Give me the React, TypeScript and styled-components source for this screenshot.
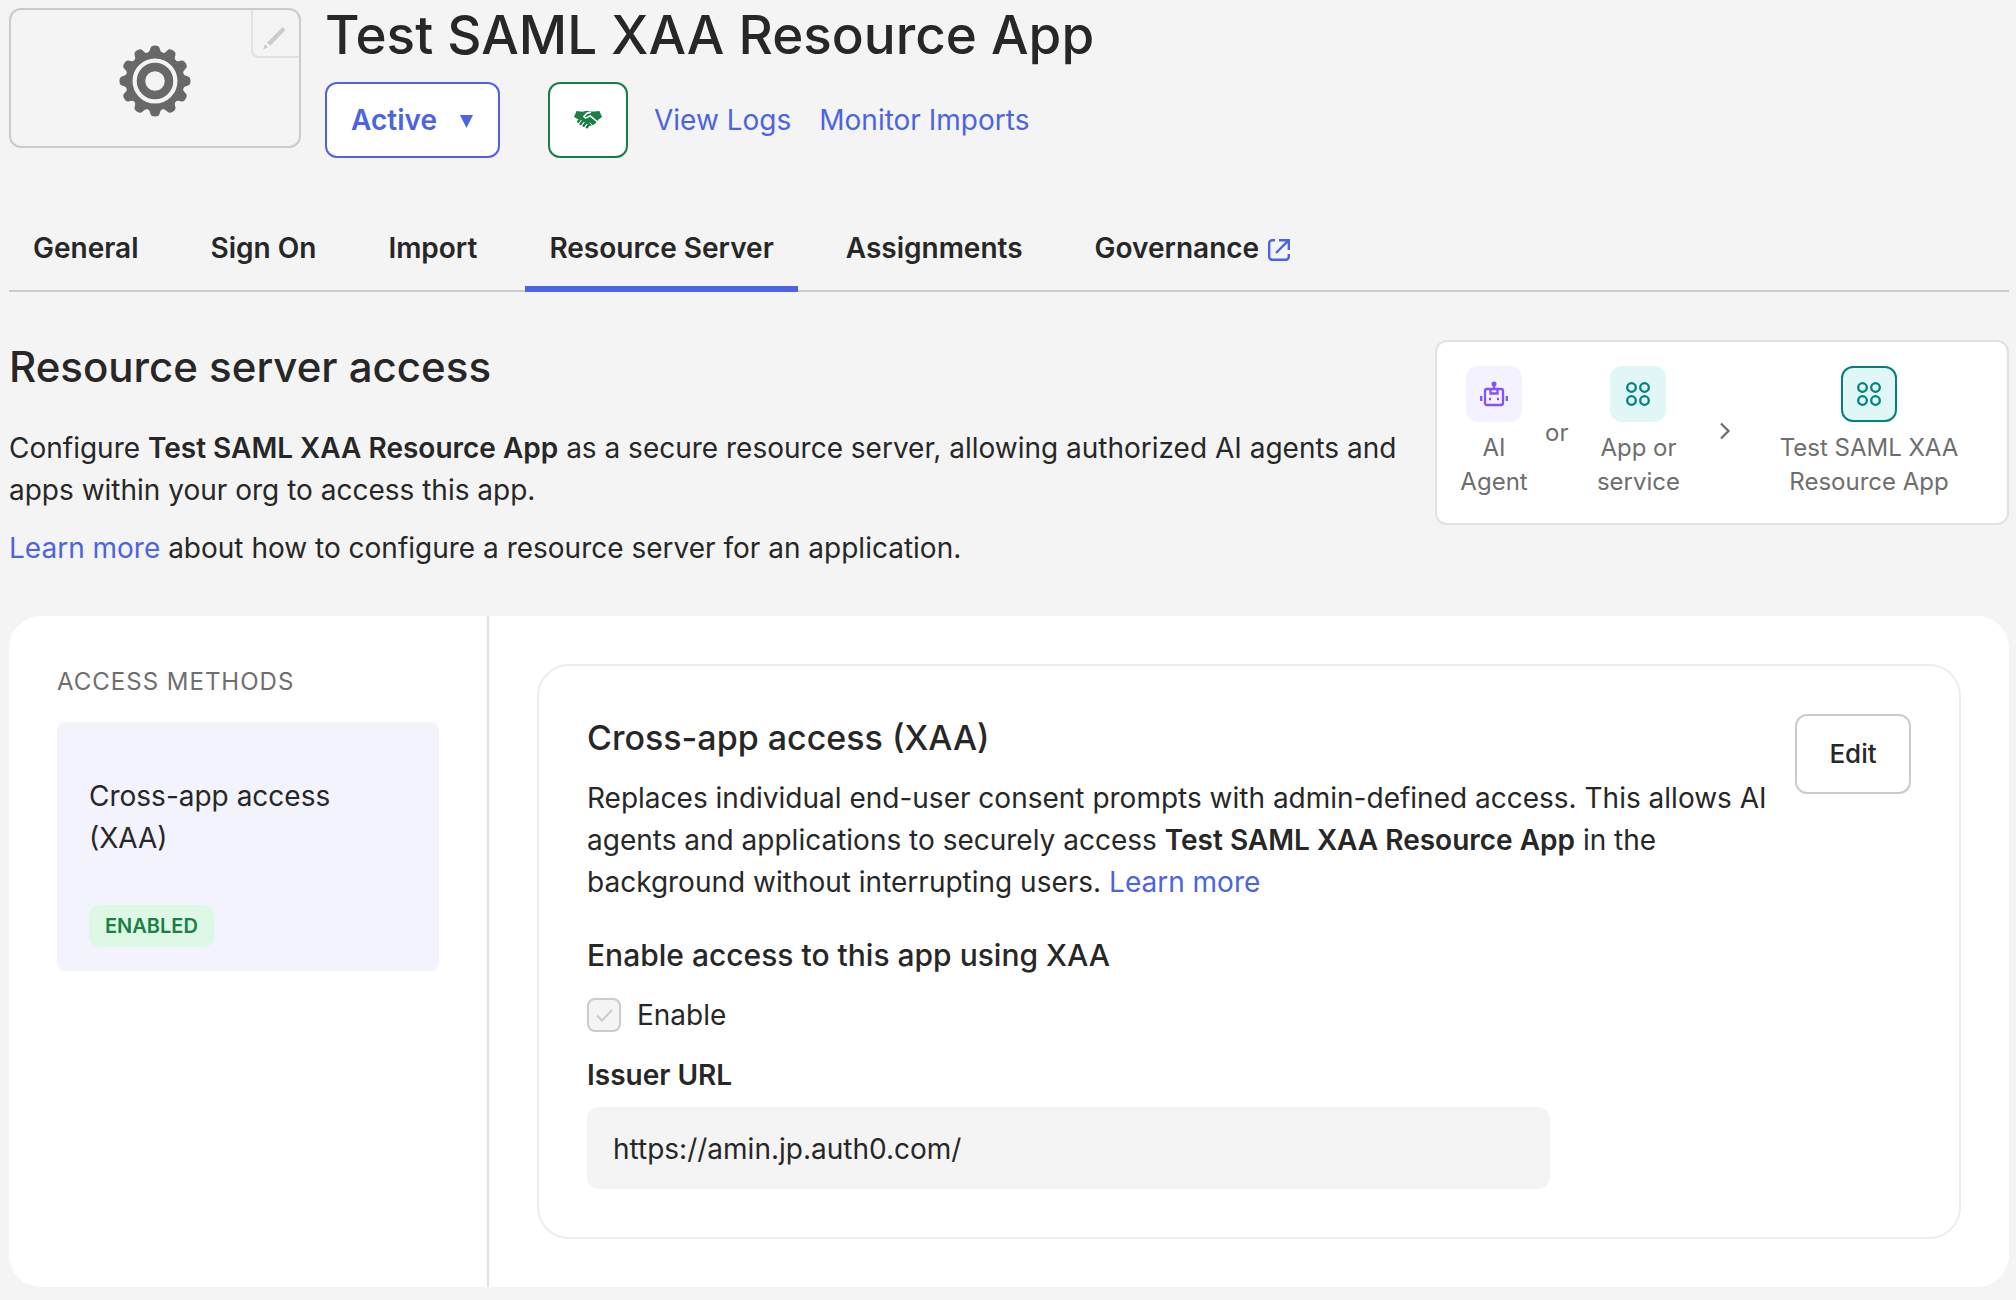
import React from 'react';
import styled, { createGlobalStyle } from 'styled-components';

const color = {
  page: '#f4f4f4',
  text: '#272727',
  muted: '#6e6e6e',
  link: '#4c64e1',
  green: '#1a7f46',
  teal: '#00827f',
  line: '#cbcbcb',
  softLine: '#e1e1e1',
};

const GlobalStyle = createGlobalStyle`
  *, *::before, *::after { box-sizing: border-box; }
  body {
    margin: 0;
    background: ${color.page};
    color: ${color.text};
    font-family: Inter, "Liberation Sans", sans-serif;
    font-size: 28px;
    line-height: 42px;
  }
  button, input { font: inherit; color: inherit; }
  h1, h2, h3, h4, p { margin: 0; }
`;

const Page = styled.div`
  padding: 8px 7px 12px 9px;
`;

const Header = styled.header`
  display: flex;
  align-items: flex-start;
  gap: 24px;
`;

const LogoBox = styled.div`
  position: relative;
  display: flex;
  align-items: center;
  justify-content: center;
  width: 292px;
  height: 140px;
  padding-top: 6px;
  border: 2px solid ${color.line};
  border-radius: 12px;
`;

const EditLogo = styled.button`
  position: absolute;
  top: 0;
  right: 0;
  display: flex;
  align-items: center;
  justify-content: center;
  width: 48px;
  height: 48px;
  padding: 12px 2px 0 0;
  background: none;
  border: solid ${color.softLine};
  border-width: 0 0 2px 2px;
  border-radius: 0 0 0 8px;
`;

const HeaderBody = styled.div`
  display: flex;
  flex-direction: column;
  gap: 20px;
`;

const Title = styled.h1`
  font-size: 53px;
  font-weight: 500;
  line-height: 54px;
`;

const Actions = styled.div`
  display: flex;
  align-items: center;
`;

const StatusButton = styled.button`
  display: flex;
  align-items: center;
  justify-content: space-between;
  width: 175px;
  height: 76px;
  margin-right: 48px;
  padding: 0 24px;
  background: #fff;
  border: 2px solid ${color.link};
  border-radius: 12px;
  color: ${color.link};
  font-weight: 600;
`;

const PartnerButton = styled.button`
  display: flex;
  align-items: center;
  justify-content: center;
  width: 80px;
  height: 76px;
  margin-right: 26px;
  padding: 0;
  background: #fff;
  border: 2px solid ${color.green};
  border-radius: 12px;
  color: ${color.green};
`;

const Link = styled.a`
  color: ${color.link};
  text-decoration: none;
`;

const HeaderLinks = styled.div`
  display: flex;
  gap: 28px;
`;

const Tabs = styled.nav`
  display: flex;
  gap: 24px;
  margin-top: 64px;
  border-bottom: 2px solid ${color.line};
`;

const Tab = styled.a<{ $active?: boolean }>`
  display: flex;
  align-items: center;
  gap: 9px;
  margin-bottom: -2px;
  padding: 5px 24px 17px;
  border-bottom: 6px solid ${(p) => (p.$active ? color.link : 'transparent')};
  color: ${color.text};
  font-weight: 600;
  text-decoration: none;
`;

const Intro = styled.section`
  display: flex;
  align-items: flex-start;
  justify-content: space-between;
  gap: 24px;
  margin-top: 48px;
`;

const IntroText = styled.div`
  flex: 1;
  display: flex;
  flex-direction: column;
  gap: 16px;
`;

const SectionTitle = styled.h2`
  margin-bottom: 17px;
  font-size: 42px;
  font-weight: 500;
  line-height: 54px;
`;

const Bold = styled.strong`
  font-weight: 600;
`;

const FlowCard = styled.div`
  display: flex;
  width: 574px;
  padding: 24px;
  background: #fff;
  border: 2px solid ${color.softLine};
  border-radius: 12px;
  color: ${color.muted};
  font-size: 24px;
  line-height: 34px;
`;

const FlowStep = styled.div<{ $width: number }>`
  display: flex;
  flex-direction: column;
  align-items: center;
  gap: 9px;
  width: ${(p) => p.$width}px;
  text-align: center;
`;

const FlowJoin = styled.div<{ $grow?: boolean }>`
  display: flex;
  flex: ${(p) => (p.$grow ? '1' : 'none')};
  align-items: center;
  justify-content: center;
  padding: ${(p) => (p.$grow ? '0 0 4px 4px' : '0 18px')};
`;

const FlowTile = styled.div<{ $tone: 'violet' | 'teal'; $outlined?: boolean }>`
  display: flex;
  align-items: center;
  justify-content: center;
  width: 56px;
  height: 56px;
  background: ${(p) => (p.$tone === 'violet' ? '#f4f2fe' : '#e0f6f7')};
  border: 2px solid ${(p) => (p.$outlined ? color.teal : 'transparent')};
  border-radius: 12px;
`;

const Panel = styled.main`
  display: grid;
  grid-template-columns: 480px 1fr;
  margin-top: 47px;
  background: #fff;
  border-radius: 32px;
`;

const Sidebar = styled.aside`
  padding: 45px 48px 48px;
  border-right: 2px solid ${color.softLine};
`;

const SidebarTitle = styled.h3`
  margin-bottom: 19px;
  color: ${color.muted};
  font-size: 24px;
  font-weight: 400;
  letter-spacing: 1px;
  line-height: 42px;
  text-transform: uppercase;
`;

const Method = styled.button`
  display: flex;
  flex-direction: column;
  align-items: flex-start;
  gap: 46px;
  width: 100%;
  padding: 53px 32px 24px;
  background: #f2f3fd;
  border: 0;
  border-radius: 8px;
  text-align: left;
`;

const Badge = styled.span`
  padding: 6px 16px;
  background: #ddf8e4;
  border-radius: 10px;
  color: ${color.green};
  font-size: 20px;
  font-weight: 600;
  line-height: 30px;
`;

const Content = styled.div`
  padding: 48px;
`;

const Card = styled.section`
  display: flex;
  flex-direction: column;
  padding: 48px;
  border: 2px solid #ededed;
  border-radius: 32px;
`;

const CardHead = styled.div`
  display: flex;
  align-items: flex-start;
  justify-content: space-between;
  gap: 24px;
`;

const CardTitle = styled.h3`
  margin-bottom: 16px;
  font-size: 34px;
  font-weight: 500;
  line-height: 47px;
`;

const EditButton = styled.button`
  flex: none;
  width: 116px;
  height: 80px;
  background: #fff;
  border: 2px solid ${color.line};
  border-radius: 12px;
  font-size: 26px;
  font-weight: 500;
`;

const FieldTitle = styled.h4`
  margin-top: 32px;
  font-size: 30px;
  font-weight: 500;
  line-height: 40px;
`;

const CheckRow = styled.label`
  display: flex;
  align-items: center;
  gap: 16px;
  margin-top: 19px;
`;

const CheckBox = styled.input`
  appearance: none;
  width: 34px;
  height: 34px;
  margin: 0;
  border: 2px solid ${color.line};
  border-radius: 8px;
  background: ${color.page} url("data:image/svg+xml,%3Csvg xmlns='http://www.w3.org/2000/svg' viewBox='0 0 30 30' fill='none' stroke='%23cbcbcb' stroke-width='2'%3E%3Cpath d='M8 15.5l5 5L23 10'/%3E%3C/svg%3E") center / 30px no-repeat;
`;

const FieldLabel = styled.label`
  margin-top: 18px;
  font-weight: 600;
`;

const TextField = styled.input`
  width: 963px;
  max-width: 100%;
  height: 82px;
  margin-top: 11px;
  padding: 2px 26px 0;
  background: ${color.page};
  border: 0;
  border-radius: 12px;
`;

const teeth = Array.from({ length: 12 }, (_, i) => i * 30);

const GearIcon = () => (
  <svg width="72" height="72" viewBox="-36 -36 72 72" fill="#686868" aria-hidden="true">
    {teeth.map((a) => (
      <path
        key={a}
        transform={`rotate(${a})`}
        d="M-8 -27 Q-5 -29.500 -4.500 -33 Q-4 -35.500 0 -35.500 Q4 -35.500 4.500 -33 Q5 -29.500 8 -27 Z"
      />
    ))}
    <circle r="26" fill="none" stroke="#686868" strokeWidth="7" />
    <circle r="14" fill="none" stroke="#686868" strokeWidth="8.500" />
  </svg>
);

const PencilIcon = () => (
  <svg width="24" height="24" viewBox="0 0 24 24" fill={color.line} aria-hidden="true">
    <path d="M19.500 0L22.500 3 7.200 18.800 4 15.700zM1.800 17.200l3.600 2.900L0 22.700z" />
  </svg>
);

const HandshakeIcon = () => (
  <svg width="28" height="20" viewBox="0 0 28 20" aria-hidden="true">
    <path
      d="M2.600 1L8 1.800 13 .8 16 1.500 20 1.400 25.400 1 28 7 24.500 9.500 22.500 12.500 20 14.500 16 16 6 9.500 3.500 9 0 7z"
      fill="currentColor"
    />
    <path
      d="M5.500 10.200L4.300 11.600M8.600 11.600L6.700 13.900M11.600 13.400L9.700 15.700M14.200 15.500L12.900 17.200"
      stroke="currentColor"
      strokeWidth="2.600"
      strokeLinecap="round"
    />
    <path
      d="M17 2.200L13 3.200 9.800 6.600C10.500 8.400 12.600 8.200 14 6.800L16.200 5.900 23.500 11.800"
      fill="none"
      stroke="#fff"
      strokeWidth="1.500"
    />
    <path d="M6.900 10.600L5 13.200M10 12.200L8 15M12.900 14.200L11.200 16.800M15.500 12.500L18 15" stroke="#fff" strokeWidth=".9" />
  </svg>
);

const ExternalIcon = () => (
  <svg width="22" height="26" viewBox="0 -4 22 26" fill="none" stroke={color.link} strokeWidth="2.400" aria-hidden="true">
    <path d="M7 1.200H4.200a3 3 0 0 0-3 3v13.600a3 3 0 0 0 3 3h13.600a3 3 0 0 0 3-3V15M11 1.200h9.800V11M20.800 1.200L8 14" />
  </svg>
);

const RobotIcon = () => (
  <svg width="28" height="26" viewBox="0 0 28 26" fill="none" stroke="#8552f5" strokeWidth="2.300" aria-hidden="true">
    <rect x="5" y="8" width="18" height="16" rx="2" />
    <path d="M10.500 8v4.500h7V8M14 3v5M1.200 15v5M26.800 15v5" />
    <circle cx="14" cy="3" r="2.500" fill="#8552f5" stroke="none" />
    <path d="M9 18h2M17 18h2" />
  </svg>
);

const AppsIcon = () => (
  <svg width="26" height="26" viewBox="0 0 26 26" fill="none" stroke={color.teal} strokeWidth="2.300" aria-hidden="true">
    <circle cx="6.500" cy="6.500" r="4.300" />
    <circle cx="19.500" cy="6.500" r="4.300" />
    <circle cx="6.500" cy="19.500" r="4.300" />
    <circle cx="19.500" cy="19.500" r="4.300" />
  </svg>
);

const ChevronIcon = () => (
  <svg width="12" height="18" viewBox="0 0 12 18" fill="none" stroke={color.muted} strokeWidth="2.300" aria-hidden="true">
    <path d="M2 1.500L9.500 9 2 16.500" />
  </svg>
);

const CaretIcon = () => (
  <svg width="14" height="16" viewBox="0 0 14 16" fill={color.link} aria-hidden="true">
    <path d="M0 3h13L6.500 16z" />
  </svg>
);

const APP = 'Test SAML XAA Resource App';

const tabs = [
  { label: 'General' },
  { label: 'Sign On' },
  { label: 'Import' },
  { label: 'Resource Server', active: true },
  { label: 'Assignments' },
  { label: 'Governance', external: true },
];

export default function App() {
  return (
    <Page>
      <GlobalStyle />
      <Header>
        <LogoBox>
          <GearIcon />
          <EditLogo type="button" aria-label="Edit logo">
            <PencilIcon />
          </EditLogo>
        </LogoBox>
        <HeaderBody>
          <Title>{APP}</Title>
          <Actions>
            <StatusButton type="button">
              Active
              <CaretIcon />
            </StatusButton>
            <PartnerButton type="button" aria-label="Partner integration">
              <HandshakeIcon />
            </PartnerButton>
            <HeaderLinks>
              <Link href="#logs">View Logs</Link>
              <Link href="#imports">Monitor Imports</Link>
            </HeaderLinks>
          </Actions>
        </HeaderBody>
      </Header>

      <Tabs>
        {tabs.map((t) => (
          <Tab key={t.label} href="#tab" $active={t.active}>
            {t.label}
            {t.external && <ExternalIcon />}
          </Tab>
        ))}
      </Tabs>

      <Intro>
        <IntroText>
          <SectionTitle>Resource server access</SectionTitle>
          <p>
            Configure <Bold>{APP}</Bold> as a secure resource server, allowing authorized AI agents and apps within
            your org to access this app.
          </p>
          <p>
            <Link href="#docs">Learn more</Link> about how to configure a resource server for an application.
          </p>
        </IntroText>
        <FlowCard>
          <FlowStep $width={66}>
            <FlowTile $tone="violet">
              <RobotIcon />
            </FlowTile>
            AI Agent
          </FlowStep>
          <FlowJoin>or</FlowJoin>
          <FlowStep $width={104}>
            <FlowTile $tone="teal">
              <AppsIcon />
            </FlowTile>
            App or service
          </FlowStep>
          <FlowJoin $grow>
            <ChevronIcon />
          </FlowJoin>
          <FlowStep $width={228}>
            <FlowTile $tone="teal" $outlined>
              <AppsIcon />
            </FlowTile>
            {APP}
          </FlowStep>
        </FlowCard>
      </Intro>

      <Panel>
        <Sidebar>
          <SidebarTitle>Access methods</SidebarTitle>
          <Method type="button">
            Cross-app access (XAA)
            <Badge>ENABLED</Badge>
          </Method>
        </Sidebar>
        <Content>
          <Card>
            <CardHead>
              <div>
                <CardTitle>Cross-app access (XAA)</CardTitle>
                <p>
                  Replaces individual end-user consent prompts with admin-defined access. This allows AI agents and
                  applications to securely access <Bold>{APP}</Bold> in the background without interrupting users.{' '}
                  <Link href="#xaa">Learn more</Link>
                </p>
              </div>
              <EditButton type="button">Edit</EditButton>
            </CardHead>
            <FieldTitle>Enable access to this app using XAA</FieldTitle>
            <CheckRow>
              <CheckBox type="checkbox" defaultChecked disabled />
              Enable
            </CheckRow>
            <FieldLabel htmlFor="issuer">Issuer URL</FieldLabel>
            <TextField id="issuer" type="text" readOnly defaultValue="https://amin.jp.auth0.com/" />
          </Card>
        </Content>
      </Panel>
    </Page>
  );
}
